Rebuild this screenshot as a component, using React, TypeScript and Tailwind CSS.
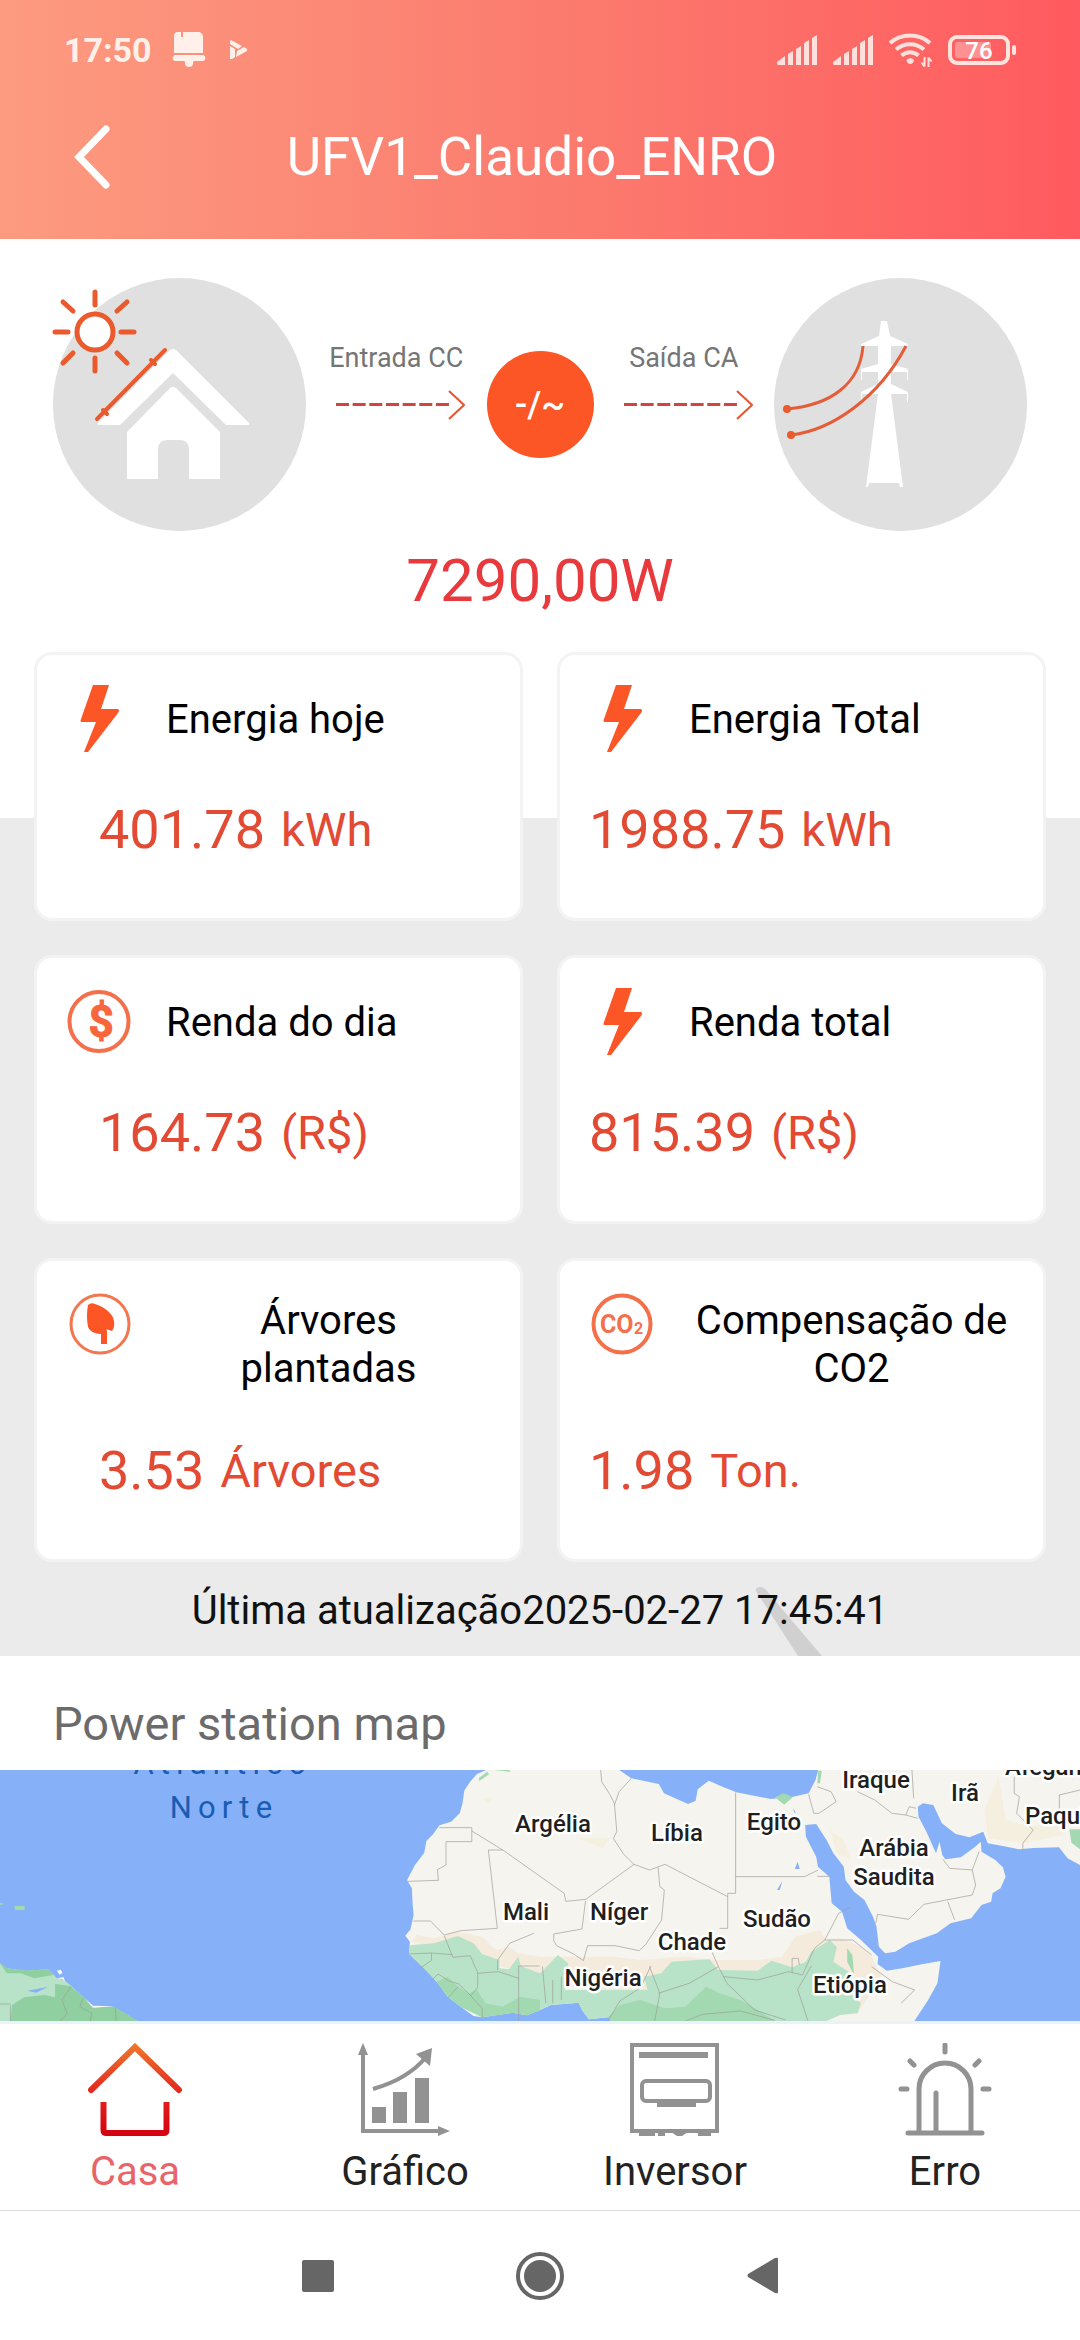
import type { ReactNode } from 'react'

function SignalIcon() {
  return (
    <svg width="40" height="30" viewBox="0 0 40 30" fill="currentColor" aria-hidden="true">
      <path d="M0 29v-2l8-6v9H1zM11 19l5-3v14h-5zM19 14l5-3v19h-5zM27 8l5-3v25h-5zM35 3l5-3v30h-5z" />
    </svg>
  )
}

function WifiIcon() {
  return (
    <svg width="43" height="34" viewBox="0 0 43 34" fill="none" stroke="currentColor" strokeWidth="4" aria-hidden="true">
      <path d="M1 10c11-10 29-10 40 0M7 16.500c8-7 20-7 28 0M12.500 22.500c5-4.500 12-4.500 17 0" />
      <path d="M17.500 27c2-2.500 6-2.500 7.500 0 0 2-2 4-3.800 4s-3.700-2-3.700-4z" fill="currentColor" stroke="none" />
      <path d="M35.500 24v9.500M35.500 33.500l-3-4M39.500 34v-9.500M39.500 24.500l3 4" strokeWidth="2" />
    </svg>
  )
}

function BatteryIcon() {
  return (
    <svg width="68" height="30" viewBox="0 0 68 30" role="img" aria-label="76%">
      <rect x="2" y="2" width="58" height="26" rx="7" fill="none" stroke="#ffe3df" strokeWidth="4" />
      <rect x="7" y="7" width="36" height="16" rx="2" fill="#fff" opacity="0.3" />
      <rect x="64" y="10" width="4" height="10" rx="2" fill="#ffe3df" />
      <text x="31" y="24" textAnchor="middle" fill="#fff" className="font-[Roboto] text-[24px] font-medium">76</text>
    </svg>
  )
}

function StatusBar() {
  return (
    <div className="flex h-10 items-center justify-between px-16 text-[#fff0ea]">
      <div className="flex items-center">
        <span className="text-[34px] leading-10 font-bold">17:50</span>
        <svg className="ml-5" width="34" height="36" viewBox="0 0 34 36" fill="currentColor" aria-hidden="true">
          <path d="M6 0h3v5h2V0h15c3 0 5 2 5 5v16H2V5c0-3 1-5 4-5z" />
          <path d="M3 23h28c3 0 3 6 0 6h-9c-1 0-1 2-1 3 0 4-8 4-8 0 0-1 0-3-1-3H3c-3 0-3-6 0-6z" />
        </svg>
        <svg className="ml-6" width="18" height="20" viewBox="0 0 18 20" fill="currentColor" aria-hidden="true">
          <path d="M1 0l11 6-4 3-8-5V1zM0 6l5 3v8l-3 2H0zM7 11l7-4 3 2v2L6 17z" />
        </svg>
      </div>
      <div className="flex items-center gap-4 text-[#ffe0dc]">
        <SignalIcon />
        <SignalIcon />
        <WifiIcon />
        <BatteryIcon />
      </div>
    </div>
  )
}

function Header() {
  return (
    <header className="bg-linear-to-r from-[#fc9b80] via-[#fb7c6f] to-[#ff5a5f] pt-[30px] pb-[50px] text-white">
      <StatusBar />
      <div className="mt-[55px] flex items-center">
        <button type="button" aria-label="Voltar" className="flex w-32 pl-[74px]">
          <svg width="38" height="64" viewBox="0 0 38 64" fill="none" stroke="currentColor" strokeWidth="7" strokeLinecap="round" aria-hidden="true">
            <path d="M32 4L5 32l27 28" />
          </svg>
        </button>
        <h1 className="flex-1 text-center text-[53px] leading-16">UFV1_Claudio_ENRO</h1>
        <div className="w-36" />
      </div>
    </header>
  )
}

function HouseDrawing() {
  return (
    <svg width="253" height="253" viewBox="0 0 253 253" className="shrink-0 overflow-visible" aria-hidden="true">
      <circle cx="126.500" cy="126.500" r="126.500" fill="#e0e0e0" />
      <path d="M117 72q3-2 6 0l73 73q1 2-1 2h-22l-53-52-53 52H46q-2 0-1-2z" fill="#fff" />
      <path d="M120 109q2 0 3 1l44 44v47h-31v-30q0-9-10-9h-11q-10 0-10 9v30H74v-47l43-44q1-1 3-1z" fill="#fff" />
      <g stroke="#ea5a2c" strokeWidth="4" strokeLinecap="round">
        <circle cx="42" cy="54" r="18" fill="#fff" strokeWidth="5" />
        <path d="M42 14v13M42 80v13M2 54h13M68 54h13M10 24l10 9M74 24l-10 9M10 85l10-10M74 85l-10-10" strokeWidth="5" />
        <path d="M112 72l-68 69M98 82l4 4M50 132l4 4" />
      </g>
    </svg>
  )
}

function TowerDrawing() {
  return (
    <svg width="253" height="253" viewBox="0 0 253 253" className="shrink-0" aria-hidden="true">
      <circle cx="126.500" cy="126.500" r="126.500" fill="#e0e0e0" />
      <path
        d="M107 43h6l3 15 18 8v2h-17v18l17 5v11h-1v-8h-16v12l17 8v10h-1v-8h-16l12 93h-3l-1-4H95l-1 4h-2l12-93H88v8h-1v-10l17-8V94H88v8h-1V91l17-5V68H87v-2l18-8z"
        fill="#fff"
      />
      <path d="M13 131c44-4 73-25 76-63M17 157c42-5 88-38 115-89" fill="none" stroke="#e55c38" strokeWidth="3" />
      <circle cx="13" cy="131" r="4" fill="#ea5a2c" />
      <circle cx="17" cy="157" r="4" fill="#ea5a2c" />
    </svg>
  )
}

function FlowArrow({ label }: { label: string }) {
  return (
    <div className="flex flex-1 flex-col items-center gap-[17px] pb-[46px]">
      <span className="text-[27px] leading-[30px] text-[#757575]">{label}</span>
      <svg width="138" height="30" viewBox="0 0 138 30" fill="none" aria-hidden="true">
        <path d="M9 14.500h113" stroke="#d2453f" strokeWidth="3" strokeDasharray="13 3.660" />
        <path d="M122 1l15 14-15 14" stroke="#e8532f" strokeWidth="2" />
      </svg>
    </div>
  )
}

function EnergyFlow() {
  return (
    <section className="bg-white px-[53px] pt-[39px] pb-9">
      <div className="flex items-center">
        <HouseDrawing />
        <FlowArrow label="Entrada CC" />
        <div className="flex size-[107px] shrink-0 items-center justify-center rounded-full bg-[#fc5526] text-4xl font-medium text-white">
          -/~
        </div>
        <FlowArrow label="Saída CA" />
        <TowerDrawing />
      </div>
      <p className="mt-[15px] text-center text-[60px] leading-[70px] text-[#e8393c]">7290,00W</p>
    </section>
  )
}

const boltIcon = (
  <svg width="67" height="67" viewBox="0 0 67 67" fill="#fc5526" aria-hidden="true">
    <path d="M27 0h16l-8 24h17q2 1 0 4L22 67h-4l12-30H15q-1-1 0-3z" />
  </svg>
)

const dollarIcon = (
  <svg width="67" height="67" viewBox="0 0 67 67" aria-hidden="true">
    <circle cx="33" cy="33.500" r="29.500" fill="none" stroke="#f4704a" strokeWidth="4" />
    <text x="35" y="49" textAnchor="middle" fill="#f7663d" stroke="#f7663d" className="font-[Roboto] text-[44px] font-bold">$</text>
  </svg>
)

const leafIcon = (
  <svg width="67" height="67" viewBox="0 0 67 67" aria-hidden="true">
    <circle cx="34" cy="33" r="29" fill="none" stroke="#f4764f" strokeWidth="3" />
    <path d="M22 14q3-3 7-1 17 6 19 17 1 6-2 10l-6-2-4-9 5 11v13h-6V43q-10 0-13-7-2-12 0-22z" fill="#fc5526" />
  </svg>
)

const co2Icon = (
  <svg width="67" height="67" viewBox="0 0 67 67" aria-hidden="true">
    <circle cx="33" cy="33" r="28.500" fill="none" stroke="#f4704a" strokeWidth="4" />
    <text x="11" y="42" fill="#f4704a" className="font-[Roboto] text-[25px] font-bold">CO</text>
    <text x="45" y="43" fill="#f4704a" className="font-[Roboto] text-base font-bold">2</text>
  </svg>
)

type Stat = { label: string; value: string; unit: string; icon: ReactNode; indent?: boolean }

const stats: Stat[] = [
  { label: 'Energia hoje', value: '401.78', unit: 'kWh', icon: boltIcon, indent: true },
  { label: 'Energia Total', value: '1988.75', unit: 'kWh', icon: boltIcon },
  { label: 'Renda do dia', value: '164.73', unit: '(R$)', icon: dollarIcon, indent: true },
  { label: 'Renda total', value: '815.39', unit: '(R$)', icon: boltIcon },
  { label: 'Árvores\nplantadas', value: '3.53', unit: 'Árvores', icon: leafIcon, indent: true },
  { label: 'Compensação de\nCO2', value: '1.98', unit: 'Ton.', icon: co2Icon },
]

function StatCard({ label, value, unit, icon, indent }: Stat) {
  const wraps = label.includes('\n')
  return (
    <article className="rounded-[18px] border-[3px] border-[#f3f3f3] bg-white px-[29px] pt-[30px] pb-[56px]">
      <div className="flex items-start gap-[33px]">
        <div className="shrink-0">{icon}</div>
        <h2
          className={`mt-1.5 flex min-h-[58px] items-center text-[40px] leading-12 whitespace-pre-line text-black ${
            wraps ? 'flex-1 justify-center text-center' : ''
          }`}
        >
          {label}
        </h2>
      </div>
      <p className={`mt-[46px] flex items-center gap-4 text-[#e24a33] ${indent ? 'pl-[33px]' : ''}`}>
        <span className="text-[54px] leading-16">{value}</span>
        <span className="text-[47px] leading-[54px]">{unit}</span>
      </p>
    </article>
  )
}

function Stats() {
  return (
    <section className="relative bg-[linear-gradient(#fff_166px,#ebebeb_166px)] pb-[22px]">
      {/* turbine blade behind the update time */}
      <svg className="absolute bottom-0 left-[70%]" width="68" height="70" viewBox="0 0 68 70" aria-hidden="true">
        <path d="M0 5q-1-4 4-4 4 0 6 3l56 66H42z" fill="#d0d0d0" />
      </svg>
      <div className="grid grid-cols-2 gap-[34px] px-[34px]">
        {stats.map((stat) => (
          <StatCard key={stat.label} {...stat} />
        ))}
      </div>
      <p className="relative mt-[25px] text-center text-[40px] leading-[47px] text-[#111]">
        Última atualização2025-02-27 17:45:41
      </p>
    </section>
  )
}

const countries = [
  { name: 'Argélia', x: 553, y: 62 },
  { name: 'Líbia', x: 677, y: 71 },
  { name: 'Egito', x: 774, y: 60 },
  { name: 'Iraque', x: 876, y: 18 },
  { name: 'Irã', x: 965, y: 31 },
  { name: 'Afeganistão', x: 1070, y: 5 },
  { name: 'Paquistão', x: 1079, y: 54 },
  { name: 'Arábia', x: 894, y: 86 },
  { name: 'Saudita', x: 894, y: 115 },
  { name: 'Mali', x: 526, y: 150 },
  { name: 'Níger', x: 619, y: 150 },
  { name: 'Chade', x: 692, y: 180 },
  { name: 'Sudão', x: 777, y: 157 },
  { name: 'Nigéria', x: 603, y: 216 },
  { name: 'Etiópia', x: 850, y: 223 },
]

function StationMap() {
  return (
    <section className="bg-white">
      <h2 className="px-[53px] pt-[41px] pb-[19px] text-[47px] leading-[54px] text-[#6b6b6b]">Power station map</h2>
      <svg viewBox="0 0 1080 251" className="block w-full overflow-hidden" role="img" aria-label="Power station map">
        <rect width="1080" height="251" fill="#86b1f8" />
        <g transform="scale(0.34439 0.33333) translate(0 -30)">
          <path
            d="M1412 30L1385 42 1365 65 1348 92 1343 130 1335 160 1310 185 1276 196 1258 222 1238 243 1232 278 1205 315 1182 360 1196 385 1198 430 1201 465 1192 508 1177 527 1190 545 1188 582 1212 605 1240 632 1268 665 1300 710 1340 742 1375 768 1400 772 1440 765 1490 758 1530 766 1568 750 1600 735 1680 728 1690 750 1710 778 1765 772 1775 783H2655L2695 720 2722 670 2731 603 2680 612 2620 625 2575 632 2548 612 2550 590 2500 540 2460 505 2445 455 2415 430 2408 350 2375 320 2370 290 2340 230 2338 195 2370 192 2400 240 2420 280 2450 320 2455 360 2480 395 2510 420 2535 470 2545 500 2552 560 2570 580 2600 575 2640 550 2720 520 2760 490 2820 475 2850 435 2878 425 2882 400 2905 385 2920 350 2912 322 2890 300 2850 275 2848 245 2830 262 2790 292 2745 298 2736 285 2728 245 2718 280 2690 215 2667 170 2665 140 2680 130 2710 135 2735 190 2775 222 2815 232 2855 215 2868 250 2900 256 2960 268 3000 264 3075 262 3100 295 3136 315V30H2376L2368 60 2348 100 2303 110 2238 117 2138 97 2098 80 2058 62 2026 88 2020 122 1998 132 1928 100 1913 72 1833 55 1798 30z"
            fill="#f6f4ee"
          />
          <path
            d="M1195 545L1210 525 1260 535 1330 515 1400 530 1440 570 1480 560 1505 580 1568 590 1640 590 1780 590 1860 600 1990 590 2080 600 2200 600 2270 590 2310 530 2380 510 2400 540 2440 535 2500 560 2530 590 2560 650 2490 760 1700 690z"
            fill="#f4ebdd"
          />
          <path d="M2858 150L2900 50 2920 180 2990 200 3070 180 3090 225 2970 250 2870 235zM2410 210l40 30 20 60-40-20zM1680 235l90 0-20 30zM1400 115l30 0-12 15z" fill="#f4efdf" />
          <path
            d="M1188 556L1260 550 1330 528 1375 550 1400 582 1450 600 1450 625 1478 628 1505 590 1512 618 1568 640 1620 585 1650 610 1640 690 1880 690 1870 650 1920 640 1950 605 2060 598 2085 630 2200 632 2240 602 2300 622 2340 605 2355 575 2410 540 2430 562 2420 605 2470 640 2470 700 2500 730 2490 760 2440 765 2400 783H1775L1765 772 1710 778 1690 750 1680 728 1600 735 1530 766 1490 758 1400 772 1340 742 1268 665 1212 605 1188 582z"
            fill="#b8e3c8"
          />
          <path
            d="M1268 665L1300 650 1330 680 1360 700 1385 690 1410 730 1460 740 1510 710 1568 720V750L1530 766 1490 758 1400 772 1340 742 1300 710zM1765 772L1800 735 1860 720 1930 745 1990 740 2050 680 2090 700 2150 720 2200 750 2250 783H1775zM2460 565l15 20 5 60-20-40z"
            fill="#a3d9b1"
          />
          <path d="M2250 112l25-12 27 12-25 22zM2376 32l10 0-5 38-8 0zM3105 208l31 0v60l-25-20zM1390 55l25-20 5 8-28 20zM1435 30h45v5zM42 438h30v12H44zM0 428l14 4-14 3z" fill="#a3d9b1" />
          <path d="M0 610L20 625 75 632 140 628 165 655 185 660 210 680 245 715 270 740 330 740 400 783H0z" fill="#b8e3c8" />
          <path d="M160 672L205 678 245 715 270 740 330 740 400 783H30L35 735 70 712 130 705 160 712zM0 610L20 625 75 632 140 628 155 645 100 655 60 640 20 640z" fill="#90cfa0" />
          <path d="M80 692l60-12-35 18zM2316 305l6 22h-14zM2256 390l16-28-8 28zM2303 145l8 14-5-2z" fill="#86b1f8" />
          <path d="M165 632l12-3 4 10-8 5zM165 655l20-3 4 14-6-8zM246 715l24 22 60 2-60 4zM385 765l25 18" fill="#fff" />
          <path
            d="M1276 203h94v42h-75v70l-25 14 3 32-88 3M1370 213l90 57h-42l26 235-106 7-48 13-40-42h-50M1460 270l178 130 5 24 58-6 140-105-30-30-30-48 10-20-7-85-15-30-22-35-4-50M1784 135l14-40 35-40M1841 313l45 17 45-17 182 97v95h-24M2113 410v-10h23V97M2136 350h200l40-20M2373 349h35M1911 322l5 58 13 10-8 90-45 72-20 20-70-15-80 0-12 45-28-20-50-25-8-15v-20l82-15 10-84M1445 630v-30l35-50 70-30M1290 527l25 65 50-5 22 50 0 45-20 25-35-35-30-10-30-20-20 20M1188 582l65-3v22l-30 22M1253 579l60 5M1387 640l60-5 60 20M1506 783l0-165 60 0M1300 715l30-35M1365 705l35 40v28M1575 620l10 110M1605 660v70M1630 650v70M1765 783l35-60 60-40 30-65M1911 700l90-30 85-50-25-60M1886 620l30 80-15 83M2086 620l25 50 80 80 90 30M2100 650l100 10 90-25 40 10 35-80 30-25 40-80 35-18M2300 640v-45h18l3 20M2396 540l80 0 55 45M2531 620l60 45 65 25-40 40M2346 783l-30-95 40-70M1990 783l50-20 110-10 100 28M2348 103l15 57h15l50-35-15-30-40-15M2490 95l50 25 50 40 40 5 10-25 20 5M2630 165l35 10M2648 30l5 85M2738 298l20 27 65 5 10 45-10 30-140 28-45 45-90-15-5 27M2752 425l20 55M2823 330l20-55M2945 50v50l15 10-8 50 48 50-30 40v18M3076 150v-45l60-15M30 735v48M205 680l-25 40 15 40-20 23M240 715l-8 25 35 20-5 23M335 742l2 40M0 732h30"
            fill="none"
            stroke="#9c9c98"
            strokeWidth="2"
          />
        </g>
        <g fill="#1a5cb4" textAnchor="middle" className="font-[Roboto] text-[31px] tracking-[0.2em]">
          <text x="223" y="4">Atlântico</text>
          <text x="224" y="48">Norte</text>
        </g>
        <g
          fill="#1f1f1f"
          stroke="#fff"
          strokeWidth="5"
          strokeLinejoin="round"
          paintOrder="stroke"
          textAnchor="middle"
          className="font-[Roboto] text-2xl font-medium"
        >
          {countries.map((country) => (
            <text key={country.name} x={country.x} y={country.y}>{country.name}</text>
          ))}
        </g>
      </svg>
    </section>
  )
}

const tabs = [
  {
    label: 'Casa',
    active: true,
    icon: (
      <>
        <defs>
          <linearGradient id="home" x1="0" y1="0" x2="0" y2="93" gradientUnits="userSpaceOnUse">
            <stop offset="0" stopColor="#f07a2c" />
            <stop offset="0.5" stopColor="#e32a20" />
            <stop offset="1" stopColor="#d6000f" />
          </linearGradient>
        </defs>
        <g fill="none" stroke="url(#home)" strokeWidth="6">
          <path d="M3 47L47 4l44 43" strokeLinecap="round" />
          <path d="M15.500 59v28q0 3 3 3h57q3 0 3-3V59" />
        </g>
      </>
    ),
  },
  {
    label: 'Gráfico',
    icon: (
      <>
        <path d="M5 10v78h77M15 46Q50 36 68 14" fill="none" stroke="#929292" strokeWidth="4" />
        <path d="M5 0l5 12H0zM92 88l-12 5V83zM74 5l-2 18-14-12zM14 64h14v16H14zM35 49h14v31H35zM57 35h14v45H57z" fill="#929292" />
      </>
    ),
  },
  {
    label: 'Inversor',
    icon: (
      <>
        <g fill="none" stroke="#929292" strokeWidth="4">
          <rect x="4" y="2" width="85" height="86" />
          <rect x="14" y="38" width="68" height="20" rx="4" />
        </g>
        <path d="M11 9h69v6H11zM29 60h39v4H29zM11 89h16v4H11zM30 89h7v4h-7zM43 89h17l-6 4h-5zM70 89h13v4H70z" fill="#929292" />
      </>
    ),
  },
  {
    label: 'Erro',
    icon: (
      <g fill="none" stroke="#929292" strokeWidth="5" strokeLinecap="round">
        <path d="M47 2v7M12 18l4 4M81 18l-4 4M3 46h6M85 46h6M10 90h74M38 50v38" />
        <path d="M21 89V46a26 26 0 0 1 52 0v43" />
      </g>
    ),
  },
]

function TabBar() {
  return (
    <nav className="grid grid-cols-4 border-t-[3px] border-[#eaf2fb] bg-white pt-[19px] pb-[14px]">
      {tabs.map((tab) => (
        <a
          key={tab.label}
          href="#"
          aria-current={tab.active ? 'page' : undefined}
          className={`flex flex-col items-center gap-3 text-[40px] leading-12 ${tab.active ? 'text-[#e86468]' : 'text-[#222]'}`}
        >
          <svg width="94" height="93" viewBox="0 0 94 93" aria-hidden="true">{tab.icon}</svg>
          {tab.label}
        </a>
      ))}
    </nav>
  )
}

function SystemBar() {
  return (
    <div className="flex h-[130px] items-center justify-center gap-[174px] border-t border-[#ddd] bg-white text-[#666]">
      <button type="button" aria-label="Recentes" className="flex size-12 items-center justify-center">
        <span className="size-8 rounded-xs bg-current" />
      </button>
      <button type="button" aria-label="Início" className="size-12 rounded-full border-4 border-current p-1">
        <span className="block size-full rounded-full bg-current" />
      </button>
      <button type="button" aria-label="Voltar" className="flex size-12 items-center justify-center">
        <svg width="31" height="37" viewBox="0 0 31 37" fill="currentColor" aria-hidden="true">
          <path d="M1 17L28 1q3-1 3 1v33q0 2-3 1L1 20q-1-1 0-3z" />
        </svg>
      </button>
    </div>
  )
}

export default function App() {
  return (
    <div className="bg-white font-[Roboto,sans-serif]">
      <Header />
      <main>
        <EnergyFlow />
        <Stats />
        <StationMap />
      </main>
      <TabBar />
      <SystemBar />
    </div>
  )
}
